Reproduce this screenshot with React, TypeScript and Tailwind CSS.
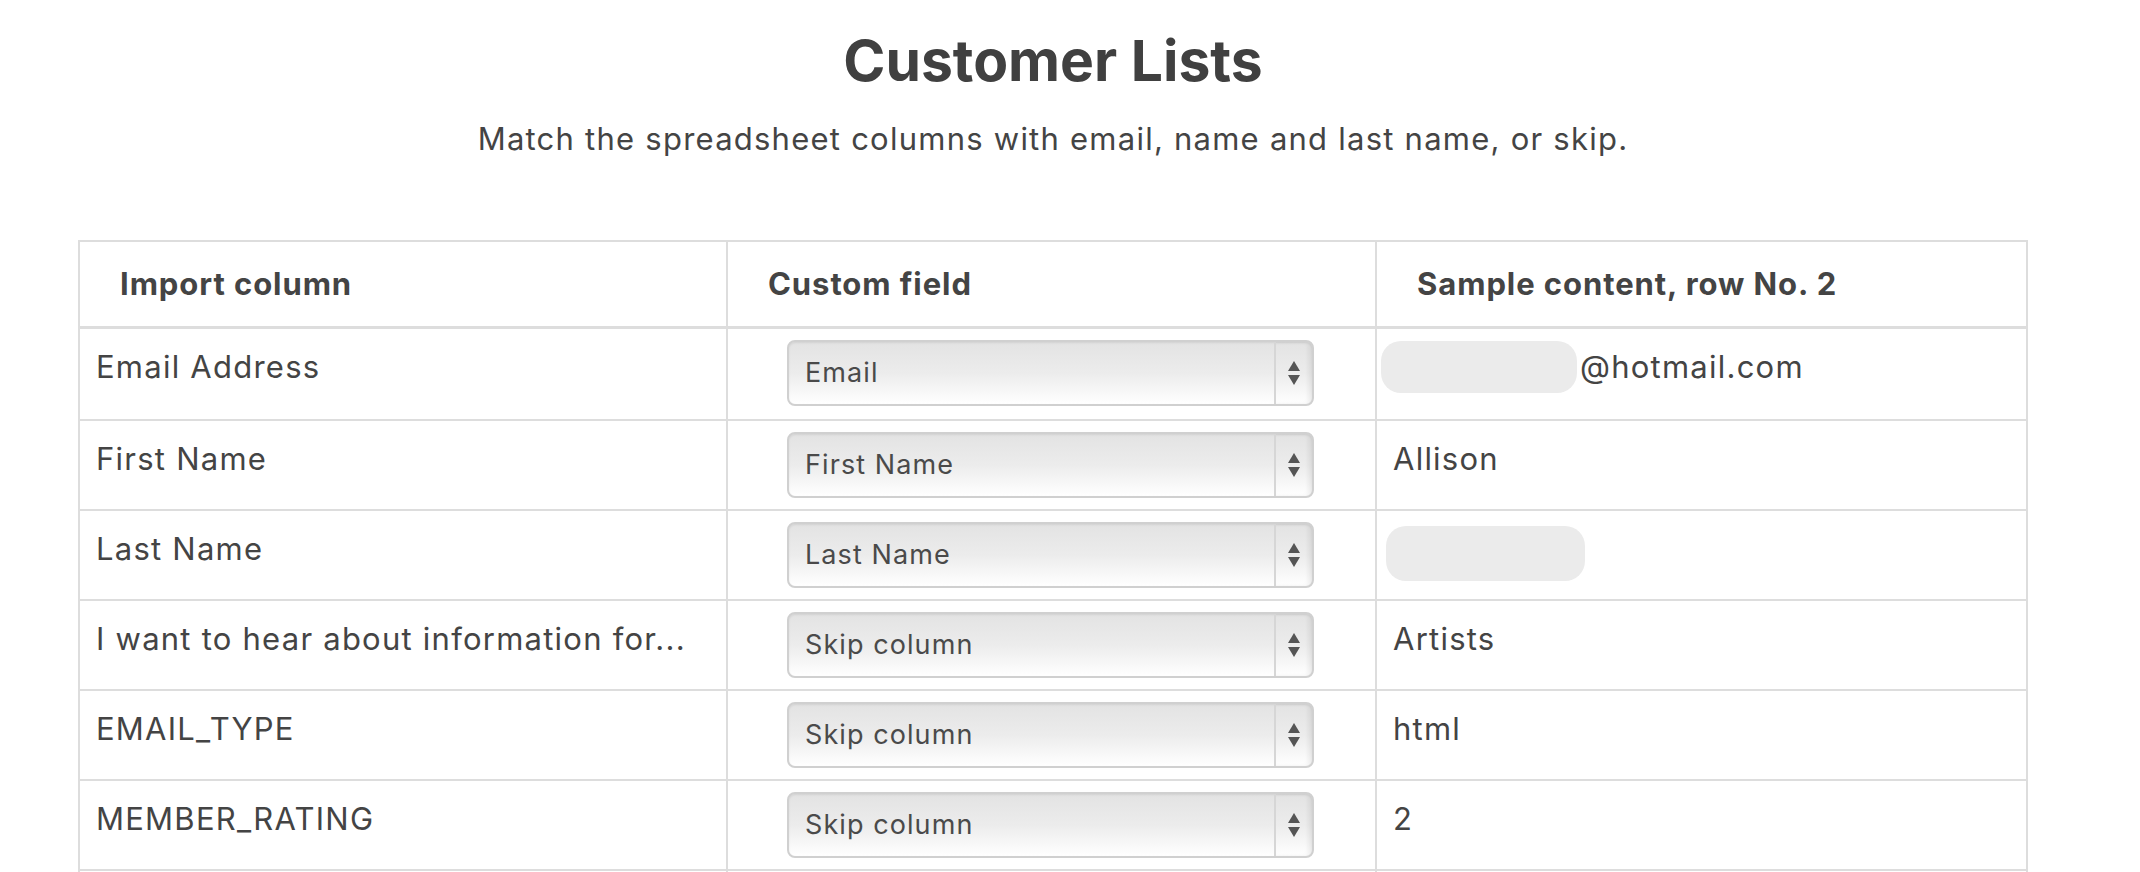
const rows = [
  { column: "Email Address", field: "Email", sample: "@hotmail.com", blur: "email" },
  { column: "First Name", field: "First Name", sample: "Allison" },
  { column: "Last Name", field: "Last Name", sample: "", blur: "name" },
  { column: "I want to hear about information for...", field: "Skip column", sample: "Artists" },
  { column: "EMAIL_TYPE", field: "Skip column", sample: "html" },
  { column: "MEMBER_RATING", field: "Skip column", sample: "2" },
];

function SelectBox({ value }: { value: string }) {
  return (
    <div className="flex h-[66px] w-[527px] items-stretch overflow-hidden rounded-[8px] border-2 border-[#d0d0d0] bg-gradient-to-b from-[#e3e3e3] via-[#ececec] to-white shadow-[inset_0_1px_2px_rgba(0,0,0,0.08)]">
      <div className="flex flex-1 items-center pl-[16px] text-[27px] tracking-[0.04em] text-[#4a4a4a]">{value}</div>
      <div className="flex w-[38px] items-center justify-center border-l-2 border-[#d6d6d6] shadow-[inset_-4px_0_4px_rgba(0,0,0,0.06)]">
        <svg width="14" height="26" viewBox="0 0 14 26">
          <path d="M7 1 L13 11 L1 11 Z" fill="#555" />
          <path d="M1 15 L13 15 L7 25 Z" fill="#555" />
        </svg>
      </div>
    </div>
  );
}

export default function App() {
  return (
    <div
      className="min-h-screen w-[2106px] bg-white text-[#444]"
      style={{ fontFamily: "Inter, 'Noto Sans', sans-serif" }}
    >
      <div className="pt-[30px] text-center">
        <h1 className="text-[57px] font-bold leading-[62px] text-[#404040]">Customer Lists</h1>
        <p className="mt-[28px] text-[31px] leading-[38px] tracking-[0.04em] text-[#444]">
          Match the spreadsheet columns with email, name and last name, or skip.
        </p>
      </div>

      <div className="mx-auto mt-[82px] w-[1950px] border-2 border-b-0 border-[#dddddd]">
        <div className="grid grid-cols-[646px_649px_651px] border-b-[3px] border-[#dddddd]">
          <div className="flex h-[84px] items-center pl-[40px] text-[31px] font-bold tracking-[0.03em] text-[#444]">
            Import column
          </div>
          <div className="flex h-[84px] items-center border-l-2 border-[#dddddd] pl-[40px] text-[31px] font-bold tracking-[0.03em] text-[#444]">
            Custom field
          </div>
          <div className="flex h-[84px] items-center border-l-2 border-[#dddddd] pl-[40px] text-[31px] font-bold tracking-[0.03em] text-[#444]">
            Sample content, row No. 2
          </div>
        </div>

        {rows.map((row, i) => (
          <div
            key={row.column}
            className={`grid h-[90px] grid-cols-[646px_649px_651px] ${i > 0 ? "border-t-2 border-[#dddddd]" : ""}`}
          >
            <div className="truncate px-[16px] pt-[20px] text-[31px] leading-[36px] tracking-[0.04em]">
              {row.column}
            </div>
            <div className="border-l-2 border-[#dddddd] pl-[59px] pt-[11px]">
              <SelectBox value={row.field} />
            </div>
            <div className="flex items-start border-l-2 border-[#dddddd] pl-[16px] pt-[20px] text-[31px] leading-[36px] tracking-[0.04em]">
              {row.blur === "email" ? (
                <>
                  <span className="-ml-[12px] -mt-[8px] mr-[3px] h-[52px] w-[196px] rounded-[20px] bg-[#ebebeb]" />
                  <span>{row.sample}</span>
                </>
              ) : row.blur === "name" ? (
                <span className="-ml-[7px] -mt-[5px] h-[55px] w-[199px] rounded-[20px] bg-[#ebebeb]" />
              ) : (
                <span>{row.sample}</span>
              )}
            </div>
          </div>
        ))}

        {/* next row, starts right at the fold */}
        <div className="grid h-[90px] grid-cols-[646px_649px_651px] border-t-2 border-[#dddddd]">
          <div />
          <div className="border-l-2 border-[#dddddd]" />
          <div className="border-l-2 border-[#dddddd]" />
        </div>
      </div>
    </div>
  );
}
